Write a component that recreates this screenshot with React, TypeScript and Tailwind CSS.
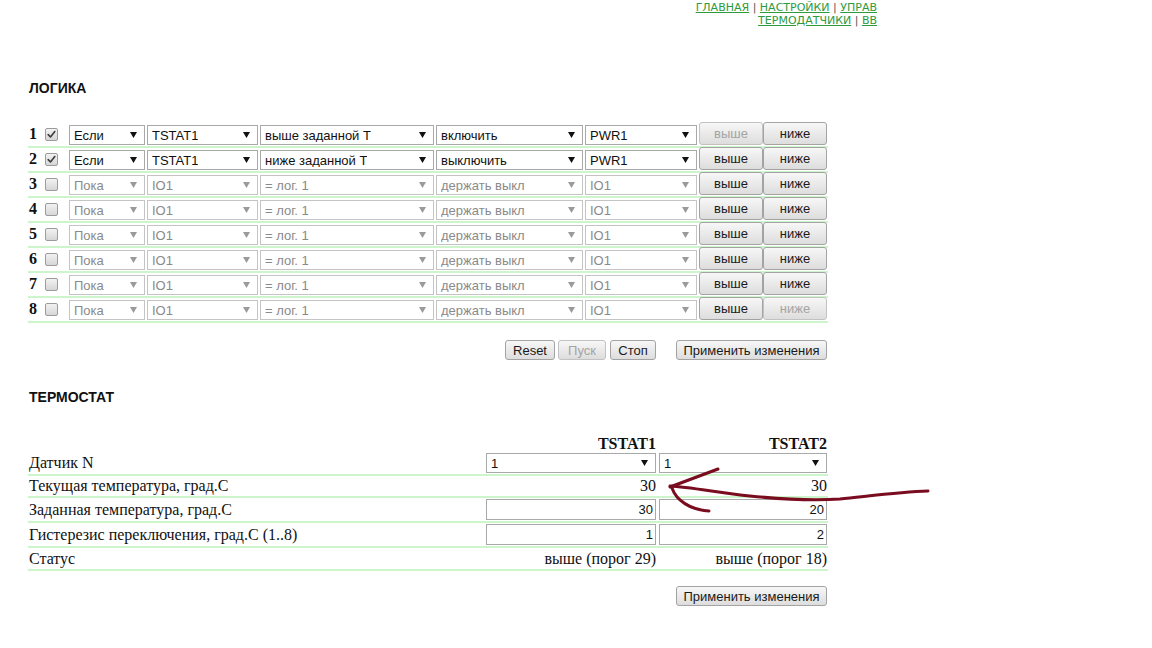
import React from "react";

type Sel = { text: string; w: string };

const sans = "font-['Liberation_Sans',Arial,sans-serif]";
const serif = "font-['Liberation_Serif','Times_New_Roman',serif]";

const rows = [
  { n: 1, on: true, cells: ["Если", "TSTAT1", "выше заданной Т", "включить", "PWR1"], upOff: true, downOff: false },
  { n: 2, on: true, cells: ["Если", "TSTAT1", "ниже заданной Т", "выключить", "PWR1"], upOff: false, downOff: false },
  ...[3, 4, 5, 6, 7, 8].map((n) => ({
    n,
    on: false,
    cells: ["Пока", "IO1", "= лог. 1", "держать выкл", "IO1"],
    upOff: false,
    downOff: n === 8,
  })),
];

const widths = ["w-[76px]", "w-[111px]", "w-[174px]", "w-[147px]", "w-[112px]"];

function Select({ text, w, disabled }: Sel & { disabled?: boolean }) {
  return (
    <div
      className={`${w} h-[20px] flex items-center justify-between bg-white border pl-[4px] pr-[7px] text-[13px] ${sans} ${
        disabled ? "border-[#c4c4c4] text-[#8a8a8a]" : "border-[#a9a9a9] text-[#111]"
      }`}
    >
      <span className="truncate leading-none">{text}</span>
      <svg width="7" height="6" viewBox="0 0 7 6" className="shrink-0">
        <path d="M0 0 H7 L3.5 6 Z" fill={disabled ? "#9a9a9a" : "#111"} />
      </svg>
    </div>
  );
}

function Button({ children, disabled, cls = "" }: { children: React.ReactNode; disabled?: boolean; cls?: string }) {
  return (
    <button
      className={`${cls} flex items-center justify-center rounded-[3px] border bg-gradient-to-b from-[#f7f7f7] to-[#dddddd] text-[13px] leading-none ${sans} ${
        disabled ? "border-[#c2c2c2] text-[#a4a4a4]" : "border-[#a3a3a3] text-[#1a1a1a]"
      }`}
    >
      {children}
    </button>
  );
}

function Check({ on }: { on: boolean }) {
  return (
    <div className="self-center w-[13px] h-[13px] rounded-[2px] border border-[#9c9c9c] bg-gradient-to-b from-[#f2f2f2] to-[#d6d6d6] flex items-center justify-center">
      {on && (
        <svg width="9" height="9" viewBox="0 0 9 9">
          <path d="M1.2 4.6 L3.5 7 L7.8 1.5" stroke="#3c3c3c" strokeWidth="1.6" fill="none" strokeLinecap="round" strokeLinejoin="round" />
        </svg>
      )}
    </div>
  );
}

function Field({ value }: { value: string }) {
  return (
    <div className={`h-[21px] flex items-center justify-end bg-white border border-[#a9a9a9] px-[2px] text-[13px] text-[#111] ${sans}`}>
      {value}
    </div>
  );
}

const link = "text-[#2e9a3e] underline";
const grid = "grid grid-cols-[455px_170px_168px] gap-x-[3px] items-center";

export default function App() {
  return (
    <div className={`relative min-h-[648px] bg-white text-[#111] ${serif}`}>
      {/* Top navigation */}
      <div className="w-[877px] flex justify-end pt-px">
        <div className="text-right text-[11px] leading-[13px] text-[#555] font-['DejaVu_Sans',Tahoma,sans-serif]">
          <div>
            <a href="#" className={link}>ГЛАВНАЯ</a> | <a href="#" className={link}>НАСТРОЙКИ</a> | <a href="#" className={link}>УПРАВ</a>
          </div>
          <div>
            <a href="#" className={link}>ТЕРМОДАТЧИКИ</a> | <a href="#" className={link}>ВВ</a>
          </div>
        </div>
      </div>

      <div className="pl-[28px] w-[828px]">
        <h2 className="mt-[53px] pl-[1px] text-[14px] leading-[16px] font-bold font-['Liberation_Sans',Arial,sans-serif]">ЛОГИКА</h2>

        {/* Logic table */}
        <div className="mt-[27px]">
          {rows.map((r) => (
            <div key={r.n} className="h-[25px] flex items-end border-b-2 border-[#ccf5cc] pb-px">
              <span className="self-center w-[17px] pl-px text-[16px] font-bold leading-none">{r.n}</span>
              <Check on={r.on} />
              <div className="flex items-end gap-[2px] ml-[11px]">
                {r.cells.map((c, i) => (
                  <Select key={i} text={c} w={widths[i]} disabled={!r.on} />
                ))}
                <div className="flex">
                  <Button cls="w-[64px] h-[23px]" disabled={r.upOff}>выше</Button>
                  <Button cls="w-[64px] h-[23px]" disabled={r.downOff}>ниже</Button>
                </div>
              </div>
            </div>
          ))}
        </div>

        <div className="mt-[17px] flex justify-end pr-px">
          <Button cls="w-[50px] h-[20px]">Reset</Button>
          <Button cls="w-[48px] h-[20px] ml-[3px]" disabled>Пуск</Button>
          <Button cls="w-[46px] h-[20px] ml-[4px]">Стоп</Button>
          <Button cls="w-[151px] h-[20px] ml-[20px]">Применить изменения</Button>
        </div>

        <h2 className="mt-[29px] pl-[1px] text-[14px] leading-[16px] font-bold font-['Liberation_Sans',Arial,sans-serif]">ТЕРМОСТАТ</h2>

        {/* Thermostat table */}
        <div className="mt-[29px] text-[16px]">
          <div className={`${grid} h-[19px] font-bold leading-none`}>
            <span />
            <span className="text-right">TSTAT1</span>
            <span className="text-right">TSTAT2</span>
          </div>
          <div className={`${grid} h-[23px] border-b-2 border-[#ccf5cc] pb-[2px]`}>
            <span className="pl-px leading-none">Датчик N</span>
            <Select text="1" w="w-full" />
            <Select text="1" w="w-full" />
          </div>
          <div className={`${grid} h-[22px] border-b-2 border-[#ccf5cc]`}>
            <span className="pl-px leading-none">Текущая температура, град.С</span>
            <span className="text-right leading-none">30</span>
            <span className="text-right leading-none">30</span>
          </div>
          <div className={`${grid} h-[25px] border-b-2 border-[#ccf5cc]`}>
            <span className="pl-px leading-none">Заданная температура, град.С</span>
            <Field value="30" />
            <Field value="20" />
          </div>
          <div className={`${grid} h-[25px] border-b-2 border-[#ccf5cc]`}>
            <span className="pl-px leading-none">Гистерезис переключения, град.С (1..8)</span>
            <Field value="1" />
            <Field value="2" />
          </div>
          <div className={`${grid} h-[23px] border-b-2 border-[#ccf5cc]`}>
            <span className="pl-px leading-none">Статус</span>
            <span className="text-right leading-none">выше (порог 29)</span>
            <span className="text-right leading-none">выше (порог 18)</span>
          </div>
        </div>

        <div className="mt-[15px] flex justify-end pr-px">
          <Button cls="w-[151px] h-[20px]">Применить изменения</Button>
        </div>
      </div>

      {/* Hand-drawn annotation arrow */}
      <svg className="absolute inset-0 pointer-events-none" width="1152" height="648">
        <g stroke="#7a0c1f" strokeWidth="3" fill="none" strokeLinecap="round" strokeLinejoin="round">
          <path d="M928 491 C900 492 870 496 840 499 C810 501 780 499 750 496 C720 493 690 487 670 486" />
          <path d="M670 487 L718 469" />
          <path d="M672 488 C676 500 690 510 709 511" />
        </g>
      </svg>
    </div>
  );
}
